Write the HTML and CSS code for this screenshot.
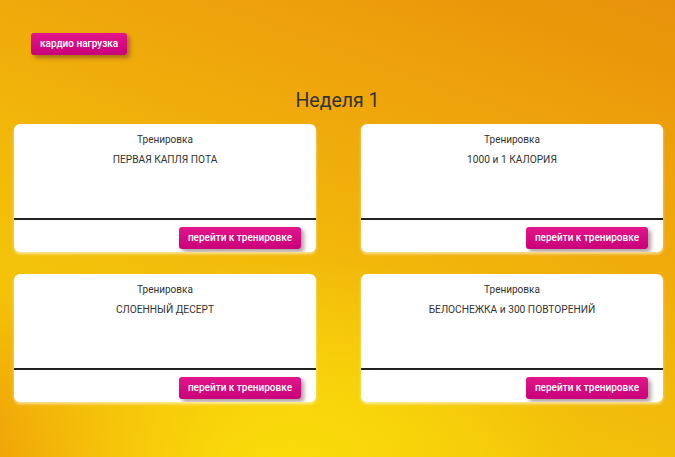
FILE: index.html
```html
<html>
	<head>
		<meta charset="utf8"/>
		<title>Неделя 1</title>
		<link rel="stylesheet" href="styles.css">
	</head>
	<body>
		<div class="top">
			<span class="btn">кардио нагрузка</span>
		</div>
		<h1 class="week">Неделя 1</h1>
		<div class="cards">
			<div class="card">
				<div class="cardBody">
					<div class="label">Тренировка</div>
					<div class="title">ПЕРВАЯ КАПЛЯ ПОТА</div>
				</div>
				<div class="cardFoot"><span class="btn">перейти к тренировке</span></div>
			</div>
			<div class="card">
				<div class="cardBody">
					<div class="label">Тренировка</div>
					<div class="title">1000 и 1 КАЛОРИЯ</div>
				</div>
				<div class="cardFoot"><span class="btn">перейти к тренировке</span></div>
			</div>
			<div class="card">
				<div class="cardBody">
					<div class="label">Тренировка</div>
					<div class="title">СЛОЕННЫЙ ДЕСЕРТ</div>
				</div>
				<div class="cardFoot"><span class="btn">перейти к тренировке</span></div>
			</div>
			<div class="card">
				<div class="cardBody">
					<div class="label">Тренировка</div>
					<div class="title">БЕЛОСНЕЖКА и 300 ПОВТОРЕНИЙ</div>
				</div>
				<div class="cardFoot"><span class="btn">перейти к тренировке</span></div>
			</div>
		</div>
	</body>
</html>
```

FILE: styles.css
```css
* {
	box-sizing : border-box;
}

html, body {
	height : 100%;
}

body {
	margin      : 0;
	font-family : Roboto, 'Liberation Sans', sans-serif;
	color       : #333;
	background  :
		radial-gradient(ellipse 65% 75% at 42% 108%, #fbe20a 0%, rgba(250, 218, 10, 0.65) 35%, rgba(250, 200, 10, 0) 70%),
		linear-gradient(200deg, #e8920a 0%, #eea20b 25%, #f2b80a 55%, #f3c40a 75%, #f0a008 100%);
	overflow    : hidden;
}

.top {
	padding : 33px 0 0 31px;
	height  : 80px;
}

.btn {
	display       : inline-block;
	height        : 22px;
	padding       : 0 9px;
	line-height   : 22px;
	border-radius : 3px;
	background    : linear-gradient(#e2168a, #c8007a);
	color         : #fff;
	font-size     : 10px;
	font-weight   : 500;
	box-shadow    : 3px 3px 4px rgba(80, 40, 40, 0.45);
}

.week {
	margin      : 9px 0 0;
	height      : 35px;
	text-align  : center;
	font-size   : 19.5px;
	font-weight : normal;
	line-height : 24px;
	color       : #333;
}

.cards {
	display               : grid;
	grid-template-columns : 302px 302px;
	column-gap            : 45px;
	row-gap               : 22px;
	padding-left          : 14px;
}

.card {
	height        : 128px;
	background    : #fff;
	border-radius : 6px;
	box-shadow    : 0 2px 3px rgba(255, 255, 255, 0.6);
	overflow      : hidden;
}

.cardBody {
	height        : 96px;
	padding-top   : 9px;
	text-align    : center;
	border-bottom : 2px solid #222;
}

.label {
	font-size   : 10px;
	line-height : 14px;
}

.title {
	margin-top  : 6px;
	font-size   : 10.2px;
	line-height : 14px;
}

.cardFoot {
	display         : flex;
	justify-content : flex-end;
	padding         : 7px 15px 0 0;
}
```
